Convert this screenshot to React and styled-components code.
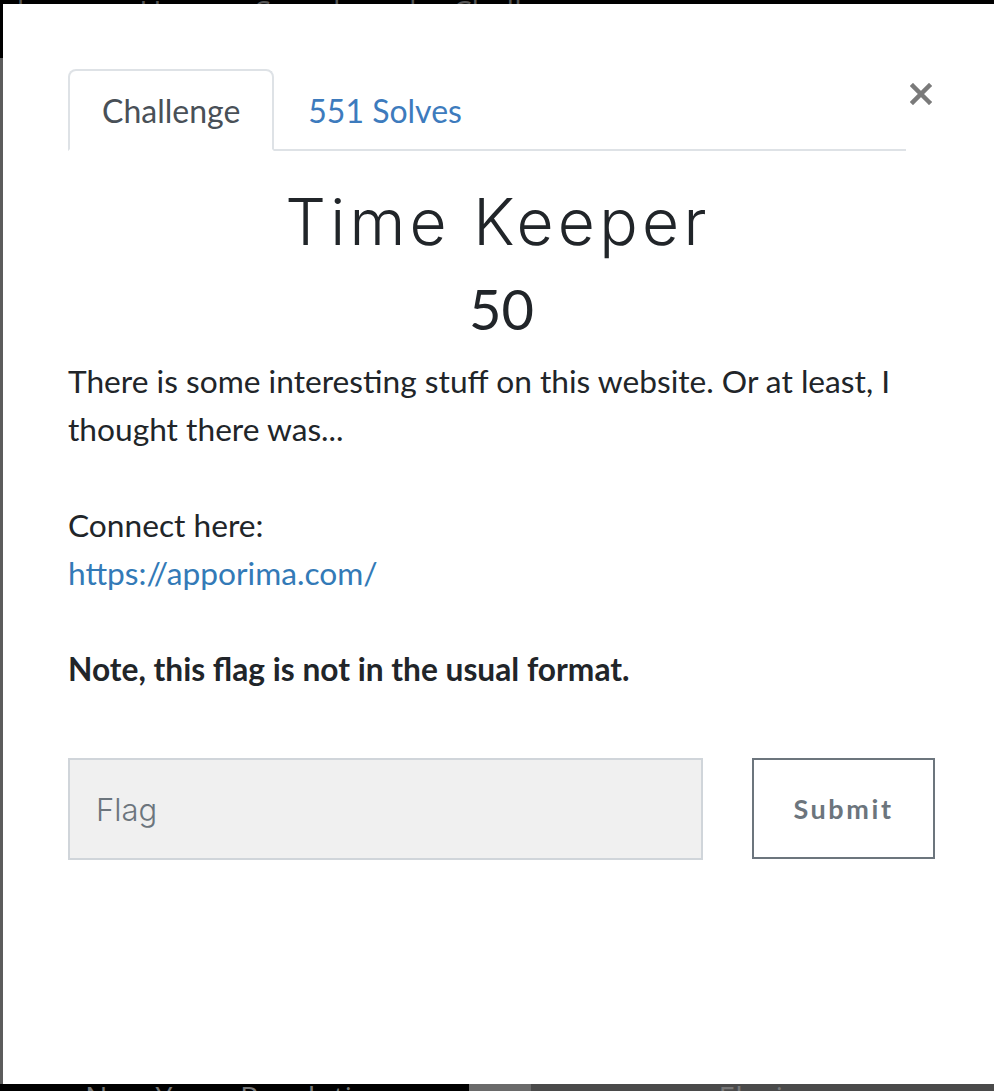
import React from "react";
import styled, { createGlobalStyle } from "styled-components";

const Global = createGlobalStyle`
  html, body { margin: 0; padding: 0; background: #000; }
  body { font-family: Lato, "Liberation Sans", sans-serif; }
  * { box-sizing: border-box; }
`;

const Page = styled.div`
  width: 994px;
  height: 1091px;
  overflow: hidden;
  background: #000;
  display: flex;
  flex-direction: column;
`;

const TopStrip = styled.div`
  height: 4px;
  flex: none;
  overflow: hidden;
  display: flex;
  align-items: flex-end;
  gap: 36px;
  color: #555;
  font-family: "Open Sans", sans-serif;
  font-size: 30px;
  line-height: 30px;
`;

const NavText = styled.span`
  transform: translateY(22px);
  white-space: nowrap;
`;

const Middle = styled.div`
  flex: none;
  height: 1080px;
  display: flex;
`;

const LeftEdge = styled.div`
  width: 3px;
  flex: none;
  background: linear-gradient(#000 0 54px, #5c5c5c 54px);
`;

const Modal = styled.div`
  width: 1000px;
  flex: none;
  height: 100%;
  background: #fff;
  padding: 65px 65px 0 65px;
  color: #212529;
`;

const TabRow = styled.div`
  display: flex;
  align-items: flex-end;
  position: relative;
`;

const Tabs = styled.div`
  display: flex;
  width: 838px;
  border-bottom: 2px solid #dee2e6;
`;

const Tab = styled.div`
  height: 82px;
  padding: 0 32px;
  display: flex;
  align-items: center;
  font-size: 32px;
  margin-bottom: -2px;
  border: 2px solid ${(p) => (p.$active ? "#dee2e6" : "transparent")};
  border-bottom-color: ${(p) => (p.$active ? "#fff" : "transparent")};
  border-radius: 8px 8px 0 0;
  background: ${(p) => (p.$active ? "#fff" : "transparent")};
  color: ${(p) => (p.$active ? "#495057" : "#3d7bbd")};
`;

const Close = styled.button`
  position: absolute;
  right: 2px;
  top: 10px;
  width: 30px;
  height: 30px;
  border: none;
  background: none;
  padding: 0;
  display: flex;
  align-items: center;
  justify-content: center;
`;

const Title = styled.h1`
  margin: 32px 0 0;
  text-align: center;
  font-family: Inter, sans-serif;
  font-weight: 300;
  font-size: 64px;
  letter-spacing: 4.3px;
  text-indent: -10px;
  line-height: 77px;
  color: #212529;
`;

const Points = styled.div`
  margin-top: 17px;
  text-align: center;
  font-size: 56px;
  line-height: 64px;
  text-indent: -3px;
  color: #212529;
`;

const Body = styled.div`
  margin-top: 16px;
  font-size: 31.7px;
  line-height: 48px;
  color: #212529;
  width: 866px;
`;

const Para = styled.p`
  margin: 0 0 48px;
  font-weight: ${(p) => (p.$bold ? 700 : 400)};
`;

const Link = styled.a`
  color: #337ab7;
  text-decoration: none;
`;

const Form = styled.div`
  display: flex;
  gap: 49px;
  width: 867px;
  margin-top: 65px;
`;

const Input = styled.input`
  width: 635px;
  height: 102px;
  background: #f0f0f0;
  border: 2px solid #d0d5da;
  padding: 0 26px;
  font-family: Inter, sans-serif;
  font-weight: 300;
  font-size: 31px;
  color: #495057;
  outline: none;
  &::placeholder { color: #6c757d; opacity: 1; }
`;

const Submit = styled.button`
  width: 183px;
  height: 101px;
  background: #fff;
  border: 2px solid #6c757d;
  color: #6c757d;
  font-family: Lato, sans-serif;
  font-weight: 700;
  font-size: 27px;
  letter-spacing: 2.6px;
  padding: 0;
`;

const BottomStrip = styled.div`
  height: 7px;
  flex: none;
  overflow: hidden;
  display: flex;
  background: linear-gradient(90deg, #000 0 469px, #6a6a6a 469px 531px, #4a4a4a 531px);
  color: #777;
  font-family: "Open Sans", sans-serif;
  font-size: 30px;
  line-height: 30px;
`;

const BottomText = styled.span`
  white-space: nowrap;
  margin-left: ${(p) => p.$ml}px;
  transform: translateY(-2px);
`;

export default function App() {
  return (
    <Page>
      <Global />
      <TopStrip>
        <NavText>eleases</NavText>
        <NavText>Users</NavText>
        <NavText>Scoreboard</NavText>
        <NavText>Challenges</NavText>
      </TopStrip>
      <Middle>
        <LeftEdge />
        <Modal>
          <TabRow>
            <Tabs>
              <Tab $active>Challenge</Tab>
              <Tab>551 Solves</Tab>
            </Tabs>
            <Close aria-label="Close">
              <svg width="22" height="22" viewBox="0 0 22 22">
                <path d="M3 3 L19 19 M19 3 L3 19" stroke="#7a7a7a" strokeWidth="4.5" strokeLinecap="square" />
              </svg>
            </Close>
          </TabRow>
          <Title>Time Keeper</Title>
          <Points>50</Points>
          <Body>
            <Para>There is some interesting stuff on this website. Or at least, I thought there was...</Para>
            <Para>
              Connect here:
              <br />
              <Link href="#">https://apporima.com/</Link>
            </Para>
            <Para $bold>Note, this flag is not in the usual format.</Para>
          </Body>
          <Form>
            <Input placeholder="Flag" />
            <Submit>Submit</Submit>
          </Form>
        </Modal>
      </Middle>
      <BottomStrip>
        <BottomText $ml={85}>New Years Resolution</BottomText>
        <BottomText $ml={330}>Elusia</BottomText>
      </BottomStrip>
    </Page>
  );
}
